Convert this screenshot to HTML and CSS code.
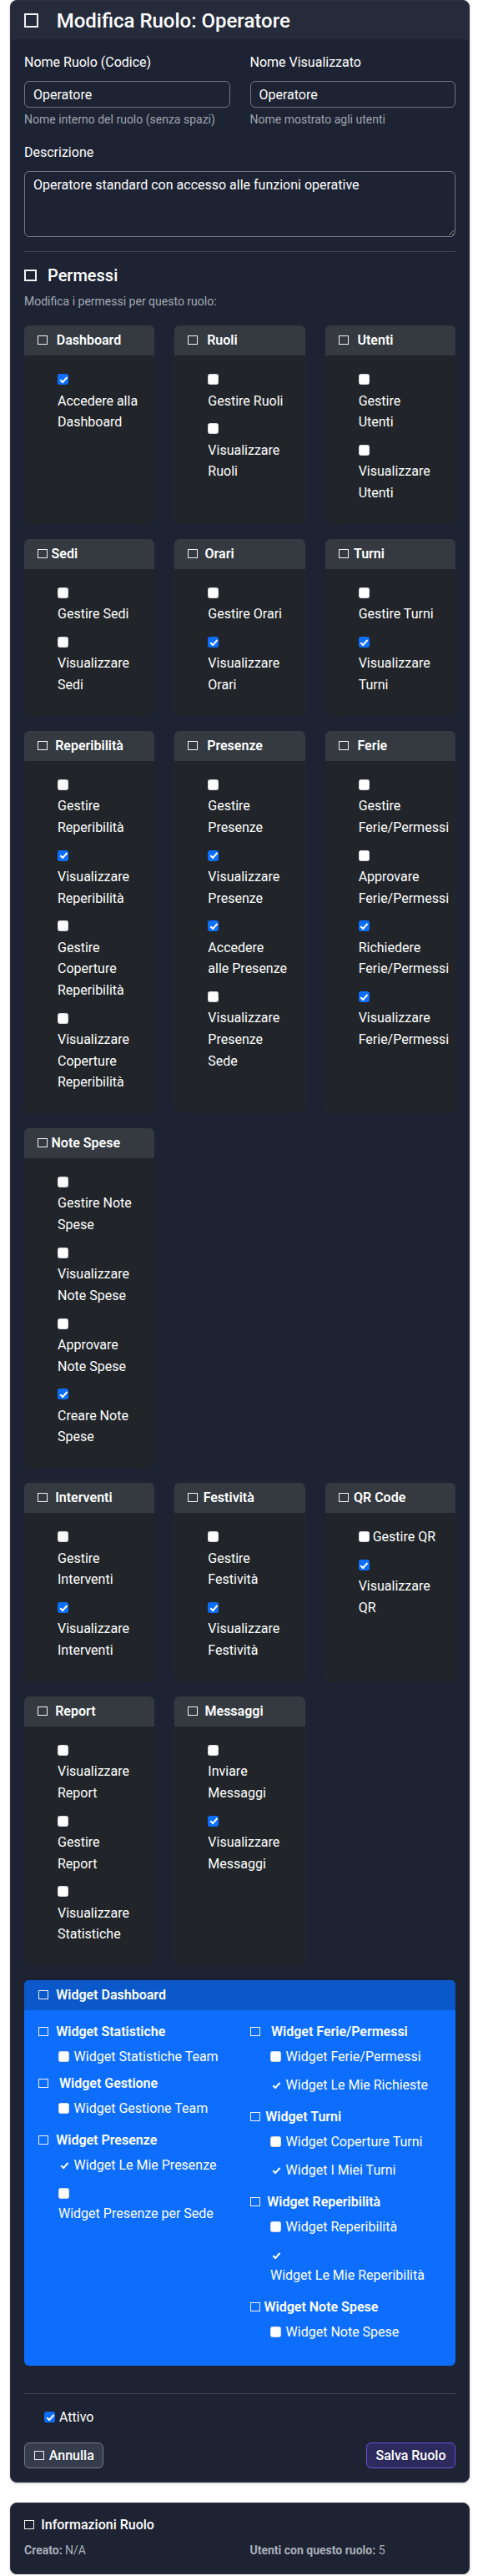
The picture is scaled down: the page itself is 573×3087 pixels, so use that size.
FILE: index.html
```html
<!DOCTYPE html>
<html lang="it">
<head>
<meta charset="utf-8">
<title>Modifica Ruolo: Operatore</title>
<link rel="stylesheet" href="styles.css">
</head>
<body>
<div class="page">
  <div class="card-main">
    <div class="main-head">
      <h4 class="main-title"><span class="bx bx-xl"></span>Modifica Ruolo: Operatore</h4>
    </div>
    <div class="main-body">
      <div class="form-row">
        <div class="group">
          <label class="flabel">Nome Ruolo (Codice)</label>
          <input class="finput" type="text" value="Operatore">
          <div class="help">Nome interno del ruolo (senza spazi)</div>
        </div>
        <div class="group">
          <label class="flabel">Nome Visualizzato</label>
          <input class="finput" type="text" value="Operatore">
          <div class="help">Nome mostrato agli utenti</div>
        </div>
      </div>
      <div class="group">
        <label class="flabel">Descrizione</label>
        <textarea class="farea">Operatore standard con accesso alle funzioni operative</textarea>
      </div>
      <hr class="sep">
      <h5 class="sec-title"><span class="bx bx-lg"></span>Permessi</h5>
      <p class="sec-sub">Modifica i permessi per questo ruolo:</p>

      <div class="pgrid">
        <div class="pcard">
          <div class="pcard-head"><span class="bx g11"></span>Dashboard</div>
          <div class="pcard-body">
            <div class="perm"><input type="checkbox" checked><label>Accedere alla<br>Dashboard</label></div>
          </div>
        </div>
        <div class="pcard">
          <div class="pcard-head"><span class="bx g11"></span>Ruoli</div>
          <div class="pcard-body">
            <div class="perm"><input type="checkbox"><label>Gestire Ruoli</label></div>
            <div class="perm"><input type="checkbox"><label>Visualizzare<br>Ruoli</label></div>
          </div>
        </div>
        <div class="pcard">
          <div class="pcard-head"><span class="bx g11"></span>Utenti</div>
          <div class="pcard-body">
            <div class="perm"><input type="checkbox"><label>Gestire<br>Utenti</label></div>
            <div class="perm"><input type="checkbox"><label>Visualizzare<br>Utenti</label></div>
          </div>
        </div>

        <div class="pcard">
          <div class="pcard-head"><span class="bx g4"></span>Sedi</div>
          <div class="pcard-body">
            <div class="perm"><input type="checkbox"><label>Gestire Sedi</label></div>
            <div class="perm"><input type="checkbox"><label>Visualizzare<br>Sedi</label></div>
          </div>
        </div>
        <div class="pcard">
          <div class="pcard-head"><span class="bx g8"></span>Orari</div>
          <div class="pcard-body">
            <div class="perm"><input type="checkbox"><label>Gestire Orari</label></div>
            <div class="perm"><input type="checkbox" checked><label>Visualizzare<br>Orari</label></div>
          </div>
        </div>
        <div class="pcard">
          <div class="pcard-head"><span class="bx g6"></span>Turni</div>
          <div class="pcard-body">
            <div class="perm"><input type="checkbox"><label>Gestire Turni</label></div>
            <div class="perm"><input type="checkbox" checked><label>Visualizzare<br>Turni</label></div>
          </div>
        </div>

        <div class="pcard">
          <div class="pcard-head"><span class="bx g9"></span>Reperibilità</div>
          <div class="pcard-body">
            <div class="perm"><input type="checkbox"><label>Gestire<br>Reperibilità</label></div>
            <div class="perm"><input type="checkbox" checked><label>Visualizzare<br>Reperibilità</label></div>
            <div class="perm"><input type="checkbox"><label>Gestire<br>Coperture<br>Reperibilità</label></div>
            <div class="perm"><input type="checkbox"><label>Visualizzare<br>Coperture<br>Reperibilità</label></div>
          </div>
        </div>
        <div class="pcard">
          <div class="pcard-head"><span class="bx g11"></span>Presenze</div>
          <div class="pcard-body">
            <div class="perm"><input type="checkbox"><label>Gestire<br>Presenze</label></div>
            <div class="perm"><input type="checkbox" checked><label>Visualizzare<br>Presenze</label></div>
            <div class="perm"><input type="checkbox" checked><label>Accedere<br>alle Presenze</label></div>
            <div class="perm"><input type="checkbox"><label>Visualizzare<br>Presenze<br>Sede</label></div>
          </div>
        </div>
        <div class="pcard">
          <div class="pcard-head"><span class="bx g11"></span>Ferie</div>
          <div class="pcard-body">
            <div class="perm"><input type="checkbox"><label>Gestire<br>Ferie/Permessi</label></div>
            <div class="perm"><input type="checkbox"><label>Approvare<br>Ferie/Permessi</label></div>
            <div class="perm"><input type="checkbox" checked><label>Richiedere<br>Ferie/Permessi</label></div>
            <div class="perm"><input type="checkbox" checked><label>Visualizzare<br>Ferie/Permessi</label></div>
          </div>
        </div>

        <div class="pcard">
          <div class="pcard-head"><span class="bx g4"></span>Note Spese</div>
          <div class="pcard-body">
            <div class="perm"><input type="checkbox"><label>Gestire Note<br>Spese</label></div>
            <div class="perm"><input type="checkbox"><label>Visualizzare<br>Note Spese</label></div>
            <div class="perm"><input type="checkbox"><label>Approvare<br>Note Spese</label></div>
            <div class="perm"><input type="checkbox" checked><label>Creare Note<br>Spese</label></div>
          </div>
        </div>
      </div>

      <div class="pgrid">
        <div class="pcard">
          <div class="pcard-head"><span class="bx g9"></span>Interventi</div>
          <div class="pcard-body">
            <div class="perm"><input type="checkbox"><label>Gestire<br>Interventi</label></div>
            <div class="perm"><input type="checkbox" checked><label>Visualizzare<br>Interventi</label></div>
          </div>
        </div>
        <div class="pcard">
          <div class="pcard-head"><span class="bx g6"></span>Festività</div>
          <div class="pcard-body">
            <div class="perm"><input type="checkbox"><label>Gestire<br>Festività</label></div>
            <div class="perm"><input type="checkbox" checked><label>Visualizzare<br>Festività</label></div>
          </div>
        </div>
        <div class="pcard">
          <div class="pcard-head"><span class="bx g6"></span>QR Code</div>
          <div class="pcard-body">
            <div class="perm inline"><input type="checkbox"><label>Gestire QR</label></div>
            <div class="perm"><input type="checkbox" checked><label>Visualizzare<br>QR</label></div>
          </div>
        </div>

        <div class="pcard">
          <div class="pcard-head"><span class="bx g9"></span>Report</div>
          <div class="pcard-body">
            <div class="perm"><input type="checkbox"><label>Visualizzare<br>Report</label></div>
            <div class="perm"><input type="checkbox"><label>Gestire<br>Report</label></div>
            <div class="perm"><input type="checkbox"><label>Visualizzare<br>Statistiche</label></div>
          </div>
        </div>
        <div class="pcard">
          <div class="pcard-head"><span class="bx g8"></span>Messaggi</div>
          <div class="pcard-body">
            <div class="perm"><input type="checkbox"><label>Inviare<br>Messaggi</label></div>
            <div class="perm"><input type="checkbox" checked><label>Visualizzare<br>Messaggi</label></div>
          </div>
        </div>
      </div>

      <div class="wcard">
        <div class="wcard-head"><span class="bx g9"></span>Widget Dashboard</div>
        <div class="wcard-body">
          <div class="wcol">
            <div class="wgroup tight">
              <div class="wtitle"><span class="bx g9"></span>Widget Statistiche</div>
              <div class="witem"><input type="checkbox"><label>Widget Statistiche Team</label></div>
            </div>
            <div class="wgroup">
              <div class="wtitle"><span class="bx g13"></span>Widget Gestione</div>
              <div class="witem"><input type="checkbox"><label>Widget Gestione Team</label></div>
            </div>
            <div class="wgroup">
              <div class="wtitle"><span class="bx g9"></span>Widget Presenze</div>
              <div class="witem"><input type="checkbox" checked><label>Widget Le Mie Presenze</label></div>
              <div class="witem wrap"><input type="checkbox"><label>Widget Presenze per Sede</label></div>
            </div>
          </div>
          <div class="wcol">
            <div class="wgroup">
              <div class="wtitle"><span class="bx g13"></span>Widget Ferie/Permessi</div>
              <div class="witem"><input type="checkbox"><label>Widget Ferie/Permessi</label></div>
              <div class="witem"><input type="checkbox" checked><label>Widget Le Mie Richieste</label></div>
            </div>
            <div class="wgroup">
              <div class="wtitle"><span class="bx g6"></span>Widget Turni</div>
              <div class="witem"><input type="checkbox"><label>Widget Coperture Turni</label></div>
              <div class="witem"><input type="checkbox" checked><label>Widget I Miei Turni</label></div>
            </div>
            <div class="wgroup">
              <div class="wtitle"><span class="bx g8"></span>Widget Reperibilità</div>
              <div class="witem"><input type="checkbox"><label>Widget Reperibilità</label></div>
              <div class="witem wrap"><input type="checkbox" checked><label>Widget Le Mie Reperibilità</label></div>
            </div>
            <div class="wgroup last">
              <div class="wtitle"><span class="bx g4"></span>Widget Note Spese</div>
              <div class="witem"><input type="checkbox"><label>Widget Note Spese</label></div>
            </div>
          </div>
        </div>
      </div>

      <hr class="sep sep-bottom">
      <div class="attivo"><input type="checkbox" checked><label>Attivo</label></div>
      <div class="actions">
        <button class="btn btn-cancel" type="button"><span class="bx g6"></span>Annulla</button>
        <button class="btn btn-save" type="button">Salva Ruolo</button>
      </div>
    </div>
  </div>

  <div class="card-info">
    <h6 class="info-title"><span class="bx g8"></span>Informazioni Ruolo</h6>
    <div class="info-row">
      <div class="info-cell"><strong>Creato:</strong> N/A</div>
      <div class="info-cell"><strong>Utenti con questo ruolo:</strong> 5</div>
    </div>
  </div>
</div>
</body>
</html>
```

FILE: styles.css
```css
* { box-sizing: border-box; }

body {
  margin: 0;
  background: #ffffff;
  font-family: Roboto, "Liberation Sans", Arial, sans-serif;
  font-size: 16px;
  color: #ffffff;
}

.page {
  width: 551px;
  margin-left: 12px;
}

/* ---------- generic box icon ---------- */
.bx {
  display: inline-block;
  width: 12px;
  height: 11px;
  border: 1.5px solid #f2f3f5;
  vertical-align: baseline;
}
.bx-xl { width: 16.7px; height: 16.7px; border-width: 2px; margin-right: 22px; }
.bx-lg { width: 14.5px; height: 14px; border-width: 2px; margin-right: 13.5px; }
.g4 { margin-right: 4.5px; }
.g6 { margin-right: 6.3px; }
.g8 { margin-right: 8.2px; }
.g9 { margin-right: 9.2px; }
.g11 { margin-right: 10.8px; }
.g13 { margin-right: 13px; }

/* ---------- checkboxes ---------- */
input[type="checkbox"] {
  -webkit-appearance: none;
  appearance: none;
  width: 13px;
  height: 13px;
  margin: 0;
  background: #ffffff;
  border: 1px solid #d5d9de;
  border-radius: 2.5px;
  position: relative;
}
input[type="checkbox"]:checked {
  background: #0d6efd;
  border-color: #0d6efd;
}
input[type="checkbox"]:checked::after {
  content: "";
  position: absolute;
  left: 3.6px;
  top: 0.8px;
  width: 3.4px;
  height: 6.6px;
  border: solid #ffffff;
  border-width: 0 2px 2px 0;
  transform: rotate(42deg);
}

/* ---------- main card ---------- */
.card-main {
  background: #1e2333;
  border: 1px solid #2b3242;
  border-radius: 8px;
  overflow: hidden;
  box-shadow: 0 1px 3px rgba(0, 0, 0, 0.22);
}

.main-head {
  background: #252b3b;
  padding: 9.5px 16px 6.5px;
  border-bottom: 1px solid #262c3c;
}
.main-title {
  margin: 0;
  font-size: 24px;
  font-weight: 500;
  line-height: 29px;
}

.main-body { padding: 16px; }

.form-row {
  display: grid;
  grid-template-columns: 1fr 1fr;
  column-gap: 24px;
}

.group { margin-bottom: 17px; }

.flabel {
  display: block;
  font-size: 16px;
  line-height: 24px;
  margin-bottom: 10px;
}

.finput,
.farea {
  display: block;
  width: 100%;
  font-family: Roboto, "Liberation Sans", Arial, sans-serif;
  font-size: 16px;
  color: #ffffff;
  background: transparent;
  border: 1px solid #6e7584;
  border-radius: 6px;
  outline: none;
}
.finput { height: 32px; padding: 3px 10px; line-height: 24px; }
.farea { height: 79px; padding: 4px 10px; line-height: 24px; resize: vertical; }

.help { margin-top: 4px; font-size: 14px; line-height: 21px; color: #9da3ae; }

.sep { border: 0; border-top: 1px solid #3f4656; margin: 0 0 16px; }

.sec-title { margin: 0 0 9px; font-size: 20px; font-weight: 500; line-height: 24px; }
.sec-sub { margin: 0 0 18px; font-size: 14px; line-height: 21px; color: #a3a9b4; }

/* ---------- permission cards ---------- */
.pgrid {
  display: grid;
  grid-template-columns: repeat(3, 1fr);
  column-gap: 24px;
  row-gap: 18px;
  margin-bottom: 18px;
}

.pcard { background: #212529; border-radius: 6px; overflow: hidden; }
.pcard-head {
  background: #343a40;
  padding: 8px 16px;
  font-size: 16px;
  font-weight: 600;
  line-height: 20px;
  white-space: nowrap;
}
.pcard-body {
  display: flex;
  flex-direction: column;
  padding: 16px;
}

.perm { padding-left: 24px; margin-bottom: 8px; font-size: 16px; line-height: 25.6px; }
.perm input { display: block; margin: 6.3px 0; }
.perm label { display: block; }
.perm.inline input { display: inline-block; vertical-align: -1.5px; margin: 0 4px 0 0; }
.perm.inline label { display: inline; }

/* ---------- widget card ---------- */
.wcard { background: #0d6efd; border-radius: 6px; overflow: hidden; }
.wcard-head { background: #0a58ca; padding: 8px 16px 8px 17px; font-weight: 600; line-height: 20px; }
.wcard-body {
  display: grid;
  grid-template-columns: 1fr 1fr;
  column-gap: 24px;
  align-items: start;
  padding: 16px 16px 18px 17px;
}
.wcol {
  display: flex;
  flex-direction: column;
}
.wgroup {
  display: flex;
  flex-direction: column;
  margin-bottom: 6px;
}
.wgroup.tight { margin-bottom: 0; }
.wgroup.last { margin-bottom: 0; }
.wtitle { font-weight: 600; line-height: 20px; margin-bottom: 8px; white-space: nowrap; }
.witem { padding-left: 24px; line-height: 24px; margin-bottom: 10px; white-space: nowrap; }
.witem input { display: inline-block; vertical-align: -1px; margin: 0 5.6px 0 0; }
.witem.wrap input { display: block; margin: 5.5px 0; }
.witem.wrap label { display: block; }

/* ---------- bottom of main card ---------- */
.sep-bottom { margin-top: 33px; }

.attivo { padding-left: 24px; line-height: 24px; margin-bottom: 18px; }
.attivo input { display: inline-block; vertical-align: -1px; margin: 0 5px 0 0; }

.actions { display: flex; justify-content: space-between; }

.btn {
  font-family: Roboto, "Liberation Sans", Arial, sans-serif;
  font-size: 16px;
  font-weight: 500;
  line-height: 21.4px;
  padding: 4px 10.5px;
  border-radius: 6px;
  color: #ffffff;
}
.btn-cancel { background: #353c4b; border: 1px solid #717887; }
.btn-save { background: #2d2a5e; border: 1px solid #6a52dc; }

/* ---------- info card ---------- */
.card-info {
  margin-top: 24px;
  background: #1e2333;
  border: 1px solid #2b3242;
  border-radius: 8px;
  padding: 16px 16px 17px;
  box-shadow: 0 1px 3px rgba(0, 0, 0, 0.22);
}
.info-title { margin: 0 0 11px; font-size: 16px; font-weight: 500; line-height: 19.2px; }
.info-row { display: grid; grid-template-columns: 1fr 1fr; column-gap: 24px; }
.info-cell { font-size: 14px; line-height: 21px; color: #a9afb9; }
.info-cell strong { font-weight: 700; }
```
